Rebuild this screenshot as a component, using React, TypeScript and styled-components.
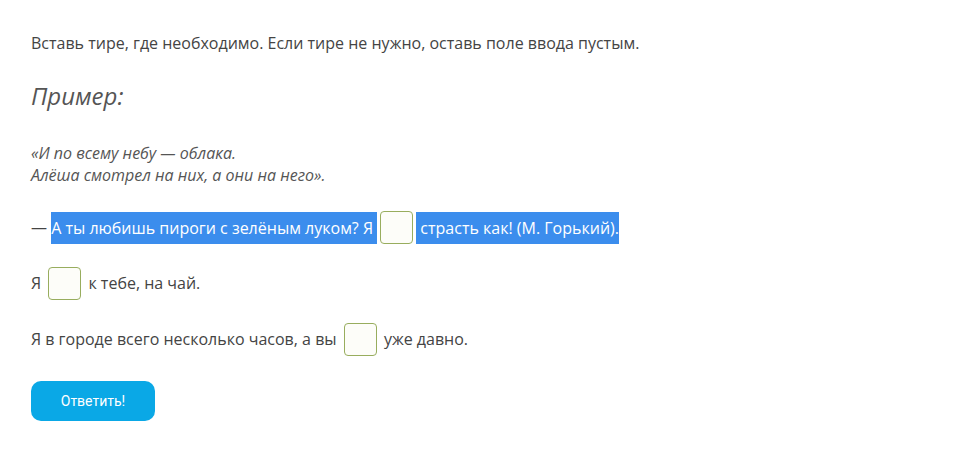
import styled, { createGlobalStyle } from 'styled-components';

const GlobalStyle = createGlobalStyle`
  html, body {
    margin: 0;
    padding: 0;
    background: #ffffff;
  }
  body {
    font-family: "Open Sans", "Liberation Sans", sans-serif;
    color: #444444;
  }
`;

const Page = styled.div`
  padding: 31px 31px 28px;
  display: flex;
  flex-direction: column;
  align-items: flex-start;
`;

const Instruction = styled.p`
  margin: 0;
  font-size: 16px;
  line-height: 24px;
`;

const ExampleTitle = styled.h2`
  margin: 25px 0 0;
  font-size: 24px;
  line-height: 32px;
  font-weight: 400;
  font-style: italic;
  color: #555555;
`;

const Quote = styled.p`
  margin: 30px 0 0;
  font-size: 16px;
  line-height: 22px;
  font-style: italic;
  color: #555555;
`;

const Row = styled.div<{ $first?: boolean }>`
  margin-top: ${(p) => (p.$first ? '25px' : '23px')};
  font-size: 16px;
  line-height: 33px;
  display: flex;
  align-items: center;
  white-space: pre;
`;

const Selected = styled.span`
  display: inline-block;
  background: #3b8ded;
  color: #ffffff;
  line-height: 32px;
`;

const Gap = styled.input`
  box-sizing: border-box;
  width: 33px;
  height: 33px;
  margin: 0 3px;
  padding: 0;
  border: 1px solid #98ad5e;
  border-radius: 4px;
  background: #fdfdf9;
  outline: none;
`;

const SubmitButton = styled.button`
  margin-top: 25px;
  width: 124px;
  height: 40px;
  border: none;
  border-radius: 10px;
  background: #0aa8e6;
  color: #ffffff;
  font-family: Roboto, "Liberation Sans", sans-serif;
  font-size: 14px;
  cursor: pointer;
`;

export default function App() {
  return (
    <>
      <GlobalStyle />
      <Page>
        <Instruction>Вставь тире, где необходимо. Если тире не нужно, оставь поле ввода пустым.</Instruction>
        <ExampleTitle>Пример:</ExampleTitle>
        <Quote>
          «И по всему небу — облака.
          <br />
          Алёша смотрел на них, а они на него».
        </Quote>
        <Row $first>
          {'— '}
          <Selected>{'А ты любишь пироги с зелёным луком? Я '}</Selected>
          <Gap type="text" />
          <Selected>{' страсть как! (М. Горький).'}</Selected>
        </Row>
        <Row>
          {'Я '}
          <Gap type="text" />
          {' к тебе, на чай.'}
        </Row>
        <Row>
          {'Я в городе всего несколько часов, а вы '}
          <Gap type="text" />
          {' уже давно.'}
        </Row>
        <SubmitButton>Ответить!</SubmitButton>
      </Page>
    </>
  );
}
